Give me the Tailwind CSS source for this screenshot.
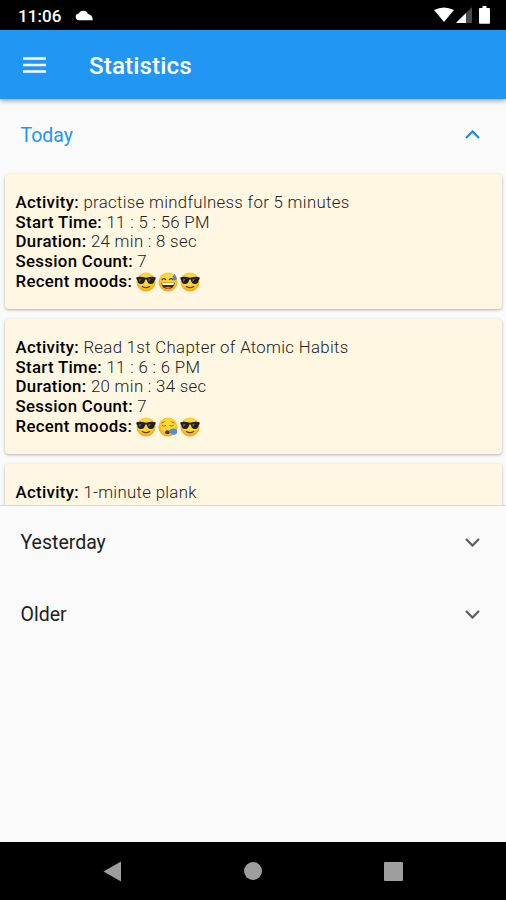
<!DOCTYPE html>
<html lang="en">
<head>
    <meta charset="UTF-8">
    <meta name="viewport" content="width=device-width, initial-scale=1.0">
    <title>Statistics</title>
    <script src="https://cdn.jsdelivr.net/npm/@tailwindcss/browser@4"></script>
</head>
<body class="bg-[#fafafa] font-['Roboto',sans-serif]">
    <!-- Emoji faces used by the mood rows -->
    <svg class="absolute w-0 h-0">
        <defs>
            <radialGradient id="face" cx="50%" cy="40%" r="60%">
                <stop offset="50%" stop-color="#fdd835"/>
                <stop offset="100%" stop-color="#f3a51c"/>
            </radialGradient>
        </defs>
        <symbol id="cool" viewBox="0 0 20 20">
            <circle cx="10" cy="10" r="9.5" fill="url(#face)"/>
            <path d="M.4 5.2Q5 4.2 10 5.8q5-1.6 9.6-.6v2.1l-.9.6q-.3 4.1-3.9 4.1-3.3 0-4-4.2-.8-.6-1.6 0-.7 4.2-4 4.2-3.6 0-3.9-4.1L.4 7.3z" fill="#231f20"/>
            <path d="M3.2 7.2l2.2-.3-2 3zM12.5 7.2l2.2-.3-2 3z" fill="#77777b"/>
            <path d="M6.3 14.5q3.7 2.4 7.4 0" fill="none" stroke="#5b3c16" stroke-width="1.2" stroke-linecap="round"/>
        </symbol>
        <symbol id="sweat" viewBox="0 0 20 20">
            <circle cx="10" cy="10" r="9.5" fill="url(#face)"/>
            <path d="M4 7.8q1.7-2.2 3.6-.3M11.4 7.5q1.9-1.9 3.5.3" fill="none" stroke="#4b351c" stroke-width="1.2" stroke-linecap="round"/>
            <path d="M3.2 10.8h13.6q-.8 6.2-6.8 6.2t-6.800-6.200z" fill="#482916"/>
            <path d="M4 11h12l-.6 2.1H4.6z" fill="#fff"/>
            <path d="M6.6 15.7q3.4-1.8 6.8 0-3.2 2.2-6.8 0z" fill="#ed6b5b"/>
            <path d="M16.3 1.8q-2 3.3-1.8 4.8.3 2 2.400 1.900 2-.2 1.900-2.200-.2-1.600-2.500-4.500z" fill="#5b83d7"/>
        </symbol>
        <symbol id="sleepy" viewBox="0 0 20 20">
            <circle cx="10" cy="10" r="9.5" fill="url(#face)"/>
            <path d="M4.2 8.6q1.8 1.3 3.5 0M11.7 8.6q1.8 1.3 3.6 0M3.9 5.9q1.500-.2 2.600-1.300M16 5.9q-1.500-.2-2.600-1.300" fill="none" stroke="#8a651c" stroke-width=".9" stroke-linecap="round"/>
            <ellipse cx="9.4" cy="15.2" rx="2.3" ry="2" fill="#4b351c"/>
            <path d="M10.8 14.2q1-2.4 3.8-2.6 3.9-.2 4.6 2.4.4 3-2.8 3.7-2.5.4-3.2-1.2-1.4-.2-2.4-2.3z" fill="#4f8ee0"/>
        </symbol>
    </svg>

    <div class="flex flex-col h-[900px] w-[506px] overflow-hidden">
        <!-- Status bar -->
        <div class="flex items-center h-[30px] bg-black text-white pl-[18px] pr-[16px] shrink-0">
            <span class="text-[17px] leading-[28px] font-medium tracking-[0.1px] pt-[2px]">11:06</span>
            <svg class="ml-[13px] w-[18px] h-[12px]" viewBox="0 0 18 12"><path d="M3.6 11.3A3.4 3.4 0 0 1 3.5 4.6 5.3 5.3 0 0 1 13 5q4.6.8 4.8 6.3z" fill="#fff"/></svg>
            <svg class="ml-auto w-[20px] h-[16px]" viewBox="0 0 20 16"><path d="M0 3q10-5 20 0L10 15z" fill="#fff"/></svg>
            <svg class="ml-[2px] w-[16px] h-[16px]" viewBox="0 0 16 16"><path d="M0 16L16 0v16z" fill="#4a4a4a"/><path d="M0 16L10 6v10z" fill="#fff"/></svg>
            <svg class="ml-[7px] w-[11px] h-[18px]" viewBox="0 0 11 18"><path d="M3.5 0h4v2H10q1 0 1 1v14q0 .8-1 .8H1q-1 0-1-.8V3q0-1 1-1h2.500z" fill="#fff"/></svg>
        </div>

        <!-- App bar -->
        <header class="relative flex items-center h-[69px] bg-[#2196f3] text-white pl-[23px] shrink-0 shadow-[0_2px_5px_rgba(0,0,0,0.35)]">
            <svg class="w-[23px] h-[16px]" viewBox="0 0 23 16"><path d="M0 1.5h23M0 8h23M0 14.5h23" stroke="#fff" stroke-width="2.7"/></svg>
            <h1 class="ml-[43px] text-[24.2px] font-medium tracking-[0.1px] pt-[3px]">Statistics</h1>
        </header>

        <!-- Today -->
        <div class="flex items-center justify-between h-[71px] pl-[20.5px] pr-[26px] text-[#2196f3] shrink-0">
            <h2 class="text-[19.5px] pt-[2px]">Today</h2>
            <svg class="w-[15px] h-[9px]" viewBox="0 0 15 9"><path d="M1 8l6.5-6.5L14 8" fill="none" stroke="#2488dc" stroke-width="2.2"/></svg>
        </div>
        <div class="flex flex-col gap-[10px] h-[336px] pt-[4px] pl-[5px] pr-[4px] overflow-hidden border-b border-[#d8dad8] shrink-0">
            <div class="h-[135px] shrink-0 rounded-[4px] bg-[#fff7e1] pl-[10.5px] pt-[19px] text-[16.8px] leading-[19.7px] text-[#23211c] shadow-[0_1px_3px_rgba(0,0,0,0.3)]">
                <p class="font-light tracking-[0.32px]"><b class="font-medium text-black">Activity:</b> practise mindfulness for 5 minutes</p>
                <p class="font-light tracking-[0.32px]"><b class="font-medium text-black">Start Time:</b> 11 : 5 : 56 PM</p>
                <p class="font-light tracking-[0.32px]"><b class="font-medium text-black">Duration:</b> 24 min : 8 sec</p>
                <p class="font-light tracking-[0.32px]"><b class="font-medium text-black">Session Count:</b> 7</p>
                <div class="flex items-center">
                    <b class="font-medium text-black tracking-[0.32px] mr-[4px]">Recent moods:</b>
                    <span class="flex gap-[2px]">
                        <svg class="w-[20px] h-[20px]"><use href="#cool"/></svg>
                        <svg class="w-[20px] h-[20px]"><use href="#sweat"/></svg>
                        <svg class="w-[20px] h-[20px]"><use href="#cool"/></svg>
                    </span>
                </div>
            </div>
            <div class="h-[135px] shrink-0 rounded-[4px] bg-[#fff7e1] pl-[10.5px] pt-[19px] text-[16.8px] leading-[19.7px] text-[#23211c] shadow-[0_1px_3px_rgba(0,0,0,0.3)]">
                <p class="font-light tracking-[0.32px]"><b class="font-medium text-black">Activity:</b> Read 1st Chapter of Atomic Habits</p>
                <p class="font-light tracking-[0.32px]"><b class="font-medium text-black">Start Time:</b> 11 : 6 : 6 PM</p>
                <p class="font-light tracking-[0.32px]"><b class="font-medium text-black">Duration:</b> 20 min : 34 sec</p>
                <p class="font-light tracking-[0.32px]"><b class="font-medium text-black">Session Count:</b> 7</p>
                <div class="flex items-center">
                    <b class="font-medium text-black tracking-[0.32px] mr-[4px]">Recent moods:</b>
                    <span class="flex gap-[2px]">
                        <svg class="w-[20px] h-[20px]"><use href="#cool"/></svg>
                        <svg class="w-[20px] h-[20px]"><use href="#sleepy"/></svg>
                        <svg class="w-[20px] h-[20px]"><use href="#cool"/></svg>
                    </span>
                </div>
            </div>
            <div class="h-[135px] shrink-0 rounded-[4px] bg-[#fff7e1] pl-[10.5px] pt-[19px] text-[16.8px] leading-[19.7px] text-[#23211c] shadow-[0_1px_3px_rgba(0,0,0,0.3)]">
                <p class="font-light tracking-[0.32px]"><b class="font-medium text-black">Activity:</b> 1-minute plank</p>
            </div>
        </div>

        <!-- Collapsed groups -->
        <div class="flex items-center justify-between h-[72px] pl-[20.5px] pr-[26px] text-[#212121] shrink-0">
            <h2 class="text-[19.5px] pt-[2px]">Yesterday</h2>
            <svg class="w-[15px] h-[9px]" viewBox="0 0 15 9"><path d="M1 1l6.5 6.5L14 1" fill="none" stroke="#5c5c5c" stroke-width="2.2"/></svg>
        </div>
        <div class="flex items-center justify-between h-[72px] pl-[20.5px] pr-[26px] text-[#212121] shrink-0">
            <h2 class="text-[19.5px] pt-[2px]">Older</h2>
            <svg class="w-[15px] h-[9px]" viewBox="0 0 15 9"><path d="M1 1l6.5 6.5L14 1" fill="none" stroke="#5c5c5c" stroke-width="2.2"/></svg>
        </div>

        <!-- Navigation bar -->
        <nav class="mt-auto flex items-center justify-between h-[58px] bg-black pl-[103px] pr-[103px] shrink-0">
            <svg class="w-[19px] h-[21px]" viewBox="0 0 19 21"><path d="M.5 10.5L18 .5v20z" fill="#9e9e9e"/></svg>
            <svg class="w-[18px] h-[18px]" viewBox="0 0 18 18"><circle cx="9" cy="9" r="9" fill="#9e9e9e"/></svg>
            <div class="w-[19px] h-[19px] rounded-[1px] bg-[#9e9e9e]"></div>
        </nav>
    </div>
</body>
</html>
